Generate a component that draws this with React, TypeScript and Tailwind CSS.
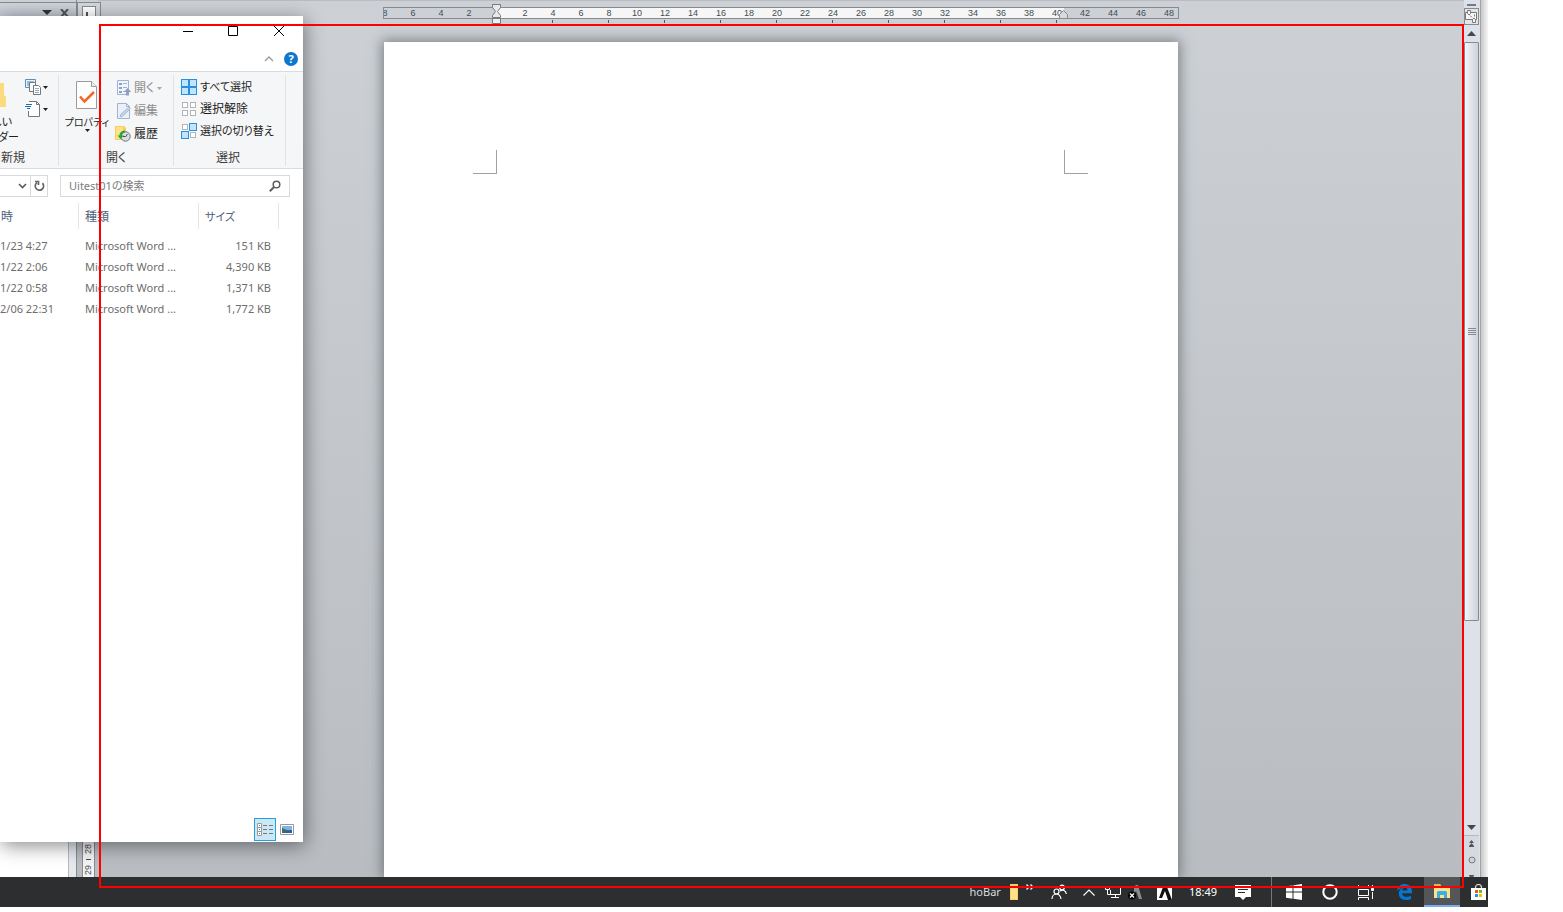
import React from "react";

const UI_FONT =
  "font-['Noto_Sans','Noto_Sans_CJK_JP',sans-serif] [font-feature-settings:'palt']";

const rulerLabels = [
  8, 6, 4, 2, 0, 2, 4, 6, 8, 10, 12, 14, 16, 18, 20, 22, 24, 26, 28, 30, 32, 34,
  36, 38, 40, 42, 44, 46, 48,
];

const files = [
  { date: "1/23 4:27", kind: "Microsoft Word ...", size: "151 KB" },
  { date: "1/22 2:06", kind: "Microsoft Word ...", size: "4,390 KB" },
  { date: "1/22 0:58", kind: "Microsoft Word ...", size: "1,371 KB" },
  { date: "2/06 22:31", kind: "Microsoft Word ...", size: "1,772 KB" },
];

function Caret({ className = "" }: { className?: string }) {
  return (
    <svg width="5" height="3" viewBox="0 0 5 3" className={className} fill="currentColor" aria-hidden="true">
      <path d="M0 0h5L2.500 3z" />
    </svg>
  );
}

function HorizontalRuler() {
  return (
    <div className="relative mx-auto w-[796px] shrink-0 pt-[7px]">
      <div className="flex h-[12px] overflow-hidden border border-[#868b91] bg-[linear-gradient(to_right,#cdd1d6_112px,#f6f6f6_112px,#f6f6f6_680px,#cdd1d6_680px)]">
        <div className="-ml-[13px] flex">
          {rulerLabels.map((n, i) => (
            <span
              key={i}
              className="w-[28px] shrink-0 text-center font-['Liberation_Sans',sans-serif] text-[9px] leading-[10px] text-[#444b52]"
            >
              {n === 0 ? "" : n}
            </span>
          ))}
        </div>
      </div>
      <div className="mt-px flex h-[3px] pl-[156px]">
        {Array.from({ length: 10 }, (_, i) => (
          <span key={i} className="flex w-[56px] shrink-0 justify-center pr-[29px]">
            <i className="block h-[3px] w-px bg-[#50565c]" />
          </span>
        ))}
      </div>
      <svg className="absolute top-[4px] left-[109px]" width="10" height="20" viewBox="0 0 10 20" aria-hidden="true">
        <path d="M.5.5h8v3L5.500 7.500 8.500 11.500v2h-8v-2L3.500 7.500.5 3.500z" fill="#e9e9e9" stroke="#777b80" />
        <path d="M.5 14.500h8v5h-8z" fill="#f0f0f0" stroke="#777b80" />
      </svg>
      <svg className="absolute top-[10px] left-[676px]" width="9" height="9" viewBox="0 0 9 9" aria-hidden="true">
        <path d="M.5 8.500v-4l4-4 4 4v4z" fill="#d9dadb" stroke="#868b91" />
      </svg>
    </div>
  );
}

function VerticalRuler() {
  return (
    <div className="flex w-[21px] shrink-0 flex-col">
      <div className="mt-[2px] -mr-[3px] flex h-[24px] justify-center border border-[#868b91] bg-[#d3d7dc] pt-[3px]">
        <div className="flex h-[16px] w-[14px] items-end justify-center border border-[#868b91] bg-white pb-px">
          <svg width="7" height="10" viewBox="0 0 7 10" aria-hidden="true">
            <path d="M1 2v7h6" fill="none" stroke="#50565c" strokeWidth="2" />
          </svg>
        </div>
      </div>
      <div className="ml-[5px] flex w-[13px] flex-1 flex-col items-center justify-end gap-[5px] border-x border-[#868b91] bg-[#f4f4f4] pb-[2px] font-['Liberation_Sans',sans-serif] text-[9px] leading-[11px] text-[#444b52]">
        <span className="rotate-180 [writing-mode:vertical-rl]">28</span>
        <i className="block h-px w-[5px] bg-[#444b52]" />
        <span className="rotate-180 [writing-mode:vertical-rl]">29</span>
      </div>
    </div>
  );
}

function ScrollBar() {
  return (
    <div className="flex w-[17px] shrink-0 flex-col items-center border-r border-[#a0a3a8] bg-[#dce1ea] pr-px text-[#50565c]">
      <div className="flex h-[8px] w-full items-end justify-center pb-[2px]">
        <i className="block h-[2px] w-[9px] bg-[#777b80]" />
      </div>
      <button aria-label="ルーラー" className="flex h-[17px] w-full items-center justify-center border border-[#868b91] bg-[#e3e5e8]">
        <svg width="13" height="13" viewBox="0 0 13 13" fill="#f8f4f4" stroke="#777b80" aria-hidden="true">
          <path d="M.5 2.500h11v7H.5z" />
          <path d="M2.500.5h3v3l-1.500 1.500-1.500-1.500zM7.500 12.500v-3l1.500-1.500 1.500 1.500v3z" />
          <path d="M5 5.500l2 2M9.500 4.500v2" fill="none" />
        </svg>
      </button>
      <button aria-label="上へスクロール" className="flex h-[17px] w-full shrink-0 items-center justify-center">
        <svg width="9" height="5" viewBox="0 0 9 5" aria-hidden="true"><path d="M0 5h9L4.500 0z" fill="#44484c" /></svg>
      </button>
      <div className="flex w-full flex-1 flex-col">
        <div className="flex w-full flex-[579_1_0%] items-center justify-center rounded-[1px] border border-[#868b91] bg-linear-to-r from-[#f4f6f9] to-[#ccd2da]">
          <div className="flex flex-col gap-px">
            {[0, 1, 2, 3].map((i) => (
              <i key={i} className="block h-px w-[8px] bg-[#868b91]" />
            ))}
          </div>
        </div>
        <div className="flex-[200_1_0%]" />
      </div>
      <button aria-label="下へスクロール" className="flex h-[16px] w-full shrink-0 items-center justify-center border-b border-[#b4b9c0]">
        <svg width="9" height="5" viewBox="0 0 9 5" aria-hidden="true"><path d="M0 0h9L4.500 5z" fill="#44484c" /></svg>
      </button>
      <div className="flex h-[41px] w-full shrink-0 flex-col items-center gap-[9px] overflow-hidden bg-[#d5dae0] pt-[4px]">
        <svg className="shrink-0" width="7" height="7" viewBox="0 0 7 7" fill="currentColor" aria-hidden="true"><path d="M1 3h5L3.500 0zM1 6h5L3.500 3zM1 6h5v1H1z" /></svg>
        <svg className="shrink-0" width="8" height="8" viewBox="0 0 8 8" aria-hidden="true"><circle cx="4" cy="4" r="3" fill="#cfd2d5" stroke="#777b80" /></svg>
        <svg className="shrink-0" width="7" height="7" viewBox="0 0 7 7" fill="currentColor" aria-hidden="true"><path d="M1 2h5v1L3.500 5 1 3zM1 5h5L3.500 7z" /></svg>
      </div>
    </div>
  );
}

function OpenIcon() {
  return (
    <svg width="14" height="16" viewBox="0 0 14 16" aria-hidden="true">
      <path d="M.5.5h11v14H.5z" fill="#f0f4fb" stroke="#a3b2d0" />
      <path d="M2 3h3v2H2zM2 7h3v2H2zM2 11h3v2H2z" fill="#8ea2c8" />
      <path d="M6 3.500h4M6 7.500h4M6 11.500h2" stroke="#a3b2d0" />
      <path d="M10.500 8l4 4h-2.500v3.500H9V12H7z" fill="#8e9fc0" />
    </svg>
  );
}

function EditIcon() {
  return (
    <svg width="14" height="16" viewBox="0 0 14 16" aria-hidden="true">
      <path d="M.5.5h9l3 3v12H.5z" fill="#eaf0fa" stroke="#a3b2d0" />
      <path d="M9.500.5v3h3" fill="none" stroke="#a3b2d0" />
      <path d="M3 14l1-3 8-7 1.500 1.500L6 13z" fill="#c3d1ea" stroke="#a3b2d0" strokeWidth=".8" />
    </svg>
  );
}

function HistoryIcon() {
  return (
    <svg width="16" height="16" viewBox="0 0 16 16" aria-hidden="true">
      <path d="M0 0h9l2 2v12H0z" fill="#f5cf58" />
      <path d="M1 1h7v12H1z" fill="#fbe28c" />
      <circle cx="10.500" cy="10.500" r="4.700" fill="#dcdfe0" stroke="#6c7278" />
      <path d="M10.500 11l2-3M8 10.500h2.500" stroke="#4d5358" fill="none" />
      <path d="M10 4.500C5.500 4.500 4.500 8 4.500 9.500H2.500L5.500 13l3.500-3.500H7C7 8 8 6.800 10 6.500z" fill="#2ba43a" />
    </svg>
  );
}

function TilesIcon({ variant }: { variant: "all" | "none" | "invert" }) {
  const on = (i: number) => variant === "all" || (variant === "invert" && (i === 1 || i === 2));
  return (
    <svg width="16" height="16" viewBox="0 0 16 16" aria-hidden="true">
      {[0, 1, 2, 3].map((i) => {
        const x = i % 2 ? 8 : 0;
        const y = i > 1 ? 8 : 0;
        return on(i) ? (
          <rect key={i} x={x + 0.5} y={y + 0.5} width="7" height="7" fill="#c4e4fb" stroke="#2690e3" />
        ) : (
          <rect key={i} x={x + 1.5} y={y + 1.5} width="5" height="5" fill="#fff" stroke="#b4b4b4" />
        );
      })}
    </svg>
  );
}

function Ribbon() {
  return (
    <div className="flex h-[98px] shrink-0 border-y border-[#dadbdc] bg-[#f5f6f7] pt-[3px] pb-[2px] text-[12px] leading-[16px] text-[#1e1e1e]">
      <section className="flex w-[59px] shrink-0 flex-col justify-between border-r border-[#e2e3e4]">
        <div className="flex justify-between pr-[10px]">
          <button className="flex w-[19px] flex-col pt-[8px] text-left text-[11px] leading-[15px]">
            <svg width="6" height="25" viewBox="0 0 6 25" aria-hidden="true">
              <path d="M0 0h4v12l2 2v10H0z" fill="#fbdb7c" />
            </svg>
            <span className="mt-[6px] flex w-[12px] justify-end overflow-hidden whitespace-nowrap">しい</span>
            <span className="flex w-[19px] justify-end overflow-hidden whitespace-nowrap">ルダー</span>
          </button>
          <div className="flex flex-col gap-[6px] pt-[4px]">
            <button aria-label="新しいアイテム" className="flex items-center gap-[2px]">
              <svg width="16" height="16" viewBox="0 0 16 16" aria-hidden="true">
                <path d="M.5.500h10v8H.5z" fill="#e9f3fb" stroke="#5f8db5" />
                <path d="M2 2h7v5H2z" fill="#8fbfe3" />
                <path d="M4.500 3.500h6v9h-6z" fill="#fff" stroke="#777" />
                <path d="M8.500 6.500h5l2 2v7h-7z" fill="#fff" stroke="#777" />
                <path d="M10 9.500h4M10 11.500h4M10 13.500h4" stroke="#8fa9c0" />
              </svg>
              <Caret />
            </button>
            <button aria-label="ショートカット" className="flex items-center gap-[2px]">
              <svg width="16" height="16" viewBox="0 0 16 16" aria-hidden="true">
                <path d="M3.500.5h8l3 3v12h-11z" fill="#fff" />
                <path d="M4 .5h7.500l3 3v12h-11V10M11.500.5v3h3" fill="none" stroke="#777" />
                <path d="M1 3.500h6M0 5.500h6M2 7.500h3" stroke="#1f6fb5" />
              </svg>
              <Caret />
            </button>
          </div>
        </div>
        <h2 className="pl-px text-[#3c3c3c]">新規</h2>
      </section>

      <section className="flex w-[115px] shrink-0 flex-col justify-between border-r border-[#e2e3e4]">
        <div className="flex">
          <button className="flex w-[56px] shrink-0 flex-col items-center pt-[6px] text-[10px]">
            <svg width="22" height="29" viewBox="0 0 22 29" aria-hidden="true">
              <path d="M.5.500h15l5 5v22H.5z" fill="#fdfdfd" stroke="#9a9a9a" />
              <path d="M15.500.5v5h5" fill="#eee" stroke="#9a9a9a" />
              <path d="M4 15.500l4.500 5L18 11" fill="none" stroke="#f26522" strokeWidth="2.500" />
            </svg>
            <span className="mt-[4px] whitespace-nowrap">プロパティ</span>
            <Caret className="-mt-px" />
          </button>
          <div className="flex flex-col gap-[7px] pt-[5px]">
            <button disabled className="flex items-center gap-[3px] whitespace-nowrap text-[#8d8d8d]">
              <span className="flex w-[16px] justify-end"><OpenIcon /></span>開く<Caret className="text-[#a8a8a8]" />
            </button>
            <button disabled className="flex items-center gap-[3px] whitespace-nowrap text-[#8d8d8d]">
              <span className="flex w-[16px] justify-end"><EditIcon /></span>編集
            </button>
            <button className="flex items-center gap-[3px] whitespace-nowrap">
              <span className="flex w-[16px] justify-end"><HistoryIcon /></span>履歴
            </button>
          </div>
        </div>
        <h2 className="text-center text-[#3c3c3c]">開く</h2>
      </section>

      <section className="flex w-[112px] shrink-0 flex-col justify-between border-r border-[#e2e3e4]">
        <div className="flex flex-col gap-[6px] pt-[4px] pl-[7px]">
          <button className="flex items-center gap-[3px] text-[11px] whitespace-nowrap"><TilesIcon variant="all" />すべて選択</button>
          <button className="flex items-center gap-[3px] whitespace-nowrap"><TilesIcon variant="none" />選択解除</button>
          <button className="flex items-center gap-[3px] text-[11px] whitespace-nowrap"><TilesIcon variant="invert" />選択の切り替え</button>
        </div>
        <h2 className="pr-[3px] text-center text-[#3c3c3c]">選択</h2>
      </section>
    </div>
  );
}

function ExplorerWindow() {
  return (
    <section
      className={`absolute top-[16px] bottom-[35px] left-0 flex w-[303px] flex-col bg-white shadow-[2px_4px_18px_rgba(0,0,0,0.45)] ${UI_FONT}`}
    >
      <div className="flex h-[30px] shrink-0 items-center justify-end gap-[34px] pr-[18px]">
        <button aria-label="最小化"><svg className="block" width="12" height="12" viewBox="0 0 12 12"><path d="M1 6.500h10" stroke="#000" /></svg></button>
        <button aria-label="最大化"><svg className="block" width="11" height="11" viewBox="0 0 11 11"><path d="M.5.5h9v9h-9z" fill="none" stroke="#000" /></svg></button>
        <button aria-label="閉じる"><svg className="block" width="12" height="12" viewBox="0 0 12 12"><path d="M1 1l10 10M11 1L1 11" stroke="#000" /></svg></button>
      </div>
      <div className="flex h-[25px] shrink-0 items-center justify-end gap-[10px] pr-[5px]">
        <button aria-label="リボンの最小化"><svg className="block" width="10" height="6" viewBox="0 0 10 6"><path d="M1 5l4-4 4 4" fill="none" stroke="#9a9a9a" strokeWidth="1.300" /></svg></button>
        <button aria-label="ヘルプ" className="size-[14px] rounded-full bg-[#0f76d0] text-[11px] leading-[14px] font-bold text-white">?</button>
      </div>
      <Ribbon />
      <div className="flex h-[34px] shrink-0 items-center pr-[13px]">
        <div className="flex h-[22px] w-[48px] items-center border border-l-0 border-[#d9d9d9]">
          <span className="flex flex-1 justify-end pr-[3px]">
            <svg width="9" height="6" viewBox="0 0 9 6" aria-hidden="true"><path d="M1 1l3.500 3.500L8 1" fill="none" stroke="#5a5a5a" strokeWidth="1.600" /></svg>
          </span>
          <button aria-label="更新" className="flex h-full w-[17px] items-center justify-center border-l border-[#d9d9d9]">
            <svg width="12" height="12" viewBox="0 0 12 12" fill="none" stroke="#666" strokeWidth="1.700" aria-hidden="true">
              <path d="M4 2.600A4.200 4.200 0 1 0 9.500 3.200M2 1.500H5.500V5" />
            </svg>
          </button>
        </div>
        <label className="ml-[12px] flex h-[22px] flex-1 items-center border border-[#d9d9d9] pr-[8px] pl-[8px]">
          <input
            aria-label="検索"
            placeholder="Uitest01の検索"
            className="w-full min-w-0 flex-1 bg-transparent text-[11px] outline-none placeholder:text-[#7c7c7c]"
          />
          <svg className="shrink-0" width="12" height="12" viewBox="0 0 12 12" fill="none" stroke="#5f5f5f" aria-hidden="true">
            <circle cx="7.500" cy="4.500" r="3.300" strokeWidth="1.500" />
            <path d="M5 7L.8 11.200" strokeWidth="2" />
          </svg>
        </label>
      </div>
      <table className="w-[279px] table-fixed border-separate border-spacing-0 text-left text-[11px] leading-[21px] text-[#6d6d6d]">
        <thead>
          <tr className="h-[26px] text-[12px] text-[#4c607a]">
            <th className="w-[79px] border-r border-[#e5e5e5] pl-px font-normal">時</th>
            <th className="w-[120px] border-r border-[#e5e5e5] pl-[6px] font-normal">種類</th>
            <th className="w-[80px] border-r border-[#e5e5e5] pl-[6px] text-[11px] font-normal">サイズ</th>
          </tr>
        </thead>
        <tbody className="before:block before:h-[6px] before:content-['']">
          {files.map((f) => (
            <tr key={f.date} className="h-[21px]">
              <td className="whitespace-nowrap">{f.date}</td>
              <td className="pl-[6px] whitespace-nowrap">{f.kind}</td>
              <td className="pr-[8px] text-right whitespace-nowrap">{f.size}</td>
            </tr>
          ))}
        </tbody>
      </table>
      <div className="mt-auto flex items-center justify-end gap-[4px] pr-[9px] pb-px">
        <button aria-label="詳細表示" className="flex h-[23px] w-[22px] items-center justify-center border border-[#26a0da] bg-[#cbe8f6]">
          <svg width="16" height="13" viewBox="0 0 16 13" aria-hidden="true">
            <path d="M.5.5h4v4h-4zM.5 4.500h4v4h-4zM.5 8.500h4v4h-4z" fill="#fff" stroke="#999" />
            <path d="M2 2h1v1H2z" fill="#3a9a4a" /><path d="M2 6h1v1H2z" fill="#3a7ac8" /><path d="M2 10h1v1H2z" fill="#d33" />
            <path d="M6 2.500h4M12 2.500h4M6 6.500h4M12 6.500h4M6 10.500h4M12 10.500h4" stroke="#777" />
          </svg>
        </button>
        <button aria-label="大アイコン">
          <svg className="block" width="14" height="11" viewBox="0 0 14 11" aria-hidden="true">
            <path d="M.5.5h13v10H.5z" fill="#fff" stroke="#999" />
            <path d="M2 2h10v4H2z" fill="#7fb2ec" /><path d="M2 4l5 2h5v3H2z" fill="#3d6f66" /><path d="M4 8l8-2v3H3z" fill="#2e5f9d" />
          </svg>
        </button>
      </div>
    </section>
  );
}

function Slot({ className, label, children }: { className: string; label: string; children: React.ReactNode }) {
  return (
    <button aria-label={label} className={`flex h-full shrink-0 items-center justify-center ${className}`}>
      {children}
    </button>
  );
}

function Taskbar() {
  return (
    <footer className={`flex h-[30px] shrink-0 items-center justify-end overflow-hidden bg-[#2c2e2f] text-[11px] text-white ${UI_FONT}`}>
      <span className="text-[#dcdcdc]">hoBar</span>
      <svg className="ml-[9px]" width="8" height="16" viewBox="0 0 8 16" aria-hidden="true"><path d="M0 0h8v16H0z" fill="#f5cf6a" /><path d="M1 2h6v13H1z" fill="#ffe08a" /></svg>
      <Slot label="その他" className="w-[24px]">
        <svg className="mb-[10px]" width="8" height="6" viewBox="0 0 8 6" fill="none" stroke="#fff" strokeWidth="1.300"><path d="M.5.5L3 3 .5 5.500M4.500.5L7 3 4.500 5.500" /></svg>
      </Slot>
      <Slot label="People" className="w-[34px]">
        <svg width="16" height="16" viewBox="0 0 16 16" fill="none" stroke="#fff" strokeWidth="1.200">
          <circle cx="5.500" cy="7.500" r="2.500" /><path d="M1 15c0-3 2-5 4.500-5s4 2 4.500 5" />
          <circle cx="11" cy="3.500" r="2.300" /><path d="M9 7c3-2 6-.5 6.300 3" />
        </svg>
      </Slot>
      <Slot label="隠れているインジケーター" className="w-[26px]">
        <svg width="12" height="7" viewBox="0 0 12 7" fill="none" stroke="#fff" strokeWidth="1.200"><path d="M.5 6.500L6 1l5.500 5.500" /></svg>
      </Slot>
      <Slot label="ネットワーク" className="w-[22px]">
        <svg width="16" height="14" viewBox="0 0 16 14" fill="none" stroke="#fff"><path d="M.5 1.500h4v3h-4zM2.500 5v4.500h3M7 2.500h8.500v7h-10V5M10.500 10v3M6 12.500h8" /></svg>
      </Slot>
      <Slot label="入力オフ" className="w-[24px]">
        <svg width="15" height="15" viewBox="0 0 15 15"><path d="M6 2l2-2h2l4 14h-3L8 6l-2 3z" fill="#8b8b8b" /><circle cx="4" cy="10.500" r="4" fill="#050505" /><path d="M2 8.500l4 4M6 8.500l-4 4" stroke="#fff" strokeWidth="1.200" /></svg>
      </Slot>
      <Slot label="入力モード" className="w-[34px]">
        <svg width="15" height="15" viewBox="0 0 15 15"><path d="M0 1h15v14H0z" fill="#fff" /><path d="M6 2h4l5 13h-4L8 6l-3 7H2z" fill="#111" /></svg>
      </Slot>
      <time className="mr-[17px] ml-[7px]">18:49</time>
      <Slot label="通知" className="w-[17px]">
        <svg width="16" height="16" viewBox="0 0 16 16"><path d="M0 1h16v12h-5l-3 3-3-3H0z" fill="#fff" /><path d="M3 5.500h10M3 8.500h7" stroke="#2c2e2f" /></svg>
      </Slot>
      <i className="mr-[3px] ml-[20px] block h-full w-px bg-[#777]" />
      <Slot label="スタート" className="w-[38px]">
        <svg width="16" height="16" viewBox="0 0 16 16" fill="#fff"><path d="M0 2.300l6.500-.9v6.200H0zM7.500 1.200L16 0v7.600H7.500zM0 8.600h6.500v6.100L0 13.800zM7.500 8.600H16V16l-8.500-1.200z" /></svg>
      </Slot>
      <Slot label="Cortana" className="w-[34px]">
        <svg width="16" height="16" viewBox="0 0 16 16"><circle cx="8" cy="8" r="6.700" fill="none" stroke="#fff" strokeWidth="2" /></svg>
      </Slot>
      <Slot label="タスクビュー" className="w-[38px]">
        <svg width="16" height="16" viewBox="0 0 16 16" fill="none" stroke="#fff"><path d="M.5 1v2.500h10V1M.5 5.500h10v6H.5zM.5 16v-2.500h10V16M14.500 1v2M14.500 8v7" /><path d="M13.500 4.500h2v2h-2z" fill="#fff" /></svg>
      </Slot>
      <Slot label="Edge" className="w-[39px]">
        <svg width="15" height="16" viewBox="0 0 15 16" fill="#0078d7"><path d="M0 7C.6 2.500 3.600 0 7.500 0 12.300 0 15 3.300 15 7.500v1.800H5c.1 2.500 2.200 3.600 4.600 3.600 1.700 0 3.200-.5 4.400-1.200v3.200c-1.300.7-3 1.100-4.900 1.100C4.500 16 1.800 13.400 1.800 9.800c0-2.600 1.300-4.600 3.600-5.700C3.300 4.400 1.200 5.200 0 7zM5.100 6.600h5.400C10.500 4.600 9.500 3.500 7.900 3.500c-1.500 0-2.500 1.100-2.800 3.100z" /></svg>
      </Slot>
      <Slot label="エクスプローラー" className="w-[36px] border-b-2 border-[#78aef0] bg-[#555657]">
        <svg width="16" height="14" viewBox="0 0 16 14"><path d="M0 0h6l1 2h9v12H0z" fill="#ffe08a" /><path d="M0 0h6l1 2H0z" fill="#e8b93d" /><path d="M3 14V8l1-1h8l1 1v6h-3v-3H6v3z" fill="#37b0ea" /></svg>
      </Slot>
      <Slot label="Microsoft Store" className="w-[28px] pl-[8px]">
        <svg width="15" height="16" viewBox="0 0 15 16"><path d="M4.500 5V3.500a3 3 0 0 1 6 0V5" fill="none" stroke="#ddd" strokeWidth="1.200" /><path d="M0 4h15v12H0z" fill="#fff" /><path d="M4 6h3v3H4z" fill="#f25022" /><path d="M8 6h3v3H8z" fill="#7fba00" /><path d="M4 10h3v3H4z" fill="#00a4ef" /><path d="M8 10h3v3H8z" fill="#ffb900" /></svg>
      </Slot>
    </footer>
  );
}

export default function App() {
  return (
    <div className="flex min-h-screen bg-white pr-[75px] pb-[5px]">
      <main className="relative flex min-w-0 flex-1 flex-col overflow-hidden">
        <div className="relative flex flex-1 overflow-hidden bg-linear-to-b from-[#cdd1d6] to-[#b9bdc2]">
          <aside className="flex w-[77px] shrink-0 flex-col border-r border-[#868b91]">
            <div className="mt-[2px] flex h-[20px] items-center justify-end gap-[8px] border-t border-[#868b91] bg-linear-to-b from-[#cfd4da] to-[#b5bbc6] pr-[7px]">
              <svg width="10" height="5" viewBox="0 0 10 5" aria-hidden="true"><path d="M0 0h10L5 5z" fill="#333" /></svg>
              <svg width="9" height="8" viewBox="0 0 9 8" aria-hidden="true"><path d="M1 0l7 8M8 0L1 8" stroke="#555" strokeWidth="2" /></svg>
            </div>
            <div className="flex flex-1 bg-[#e6eaef]">
              <div className="w-[69px] border-r border-[#b4b9c0] bg-white" />
            </div>
          </aside>
          <VerticalRuler />
          <div className="flex min-w-0 flex-1 flex-col border-t border-[#b9bdc2]">
            <div className="-mt-px flex"><HorizontalRuler /></div>
            <div className="mx-auto mt-[19px] flex w-[794px] flex-1 justify-between bg-white pt-[108px] pr-[90px] pl-[89px] shadow-[0_0_12px_2px_rgba(70,75,80,0.6)]">
              <i className="block h-[24px] w-[24px] border-r border-b border-[#a0a0a0]" />
              <i className="block h-[24px] w-[24px] border-b border-l border-[#a0a0a0]" />
            </div>
          </div>
          <ScrollBar />
          <div className="w-[7px] shrink-0 bg-linear-to-r from-[#c8c8c8] to-[#f6f6f6]" />
          <ExplorerWindow />
        </div>
        <Taskbar />
        <div className="pointer-events-none absolute top-[24px] right-[24px] bottom-[19px] left-[99px] border-2 border-[#ff0000]" />
      </main>
    </div>
  );
}
